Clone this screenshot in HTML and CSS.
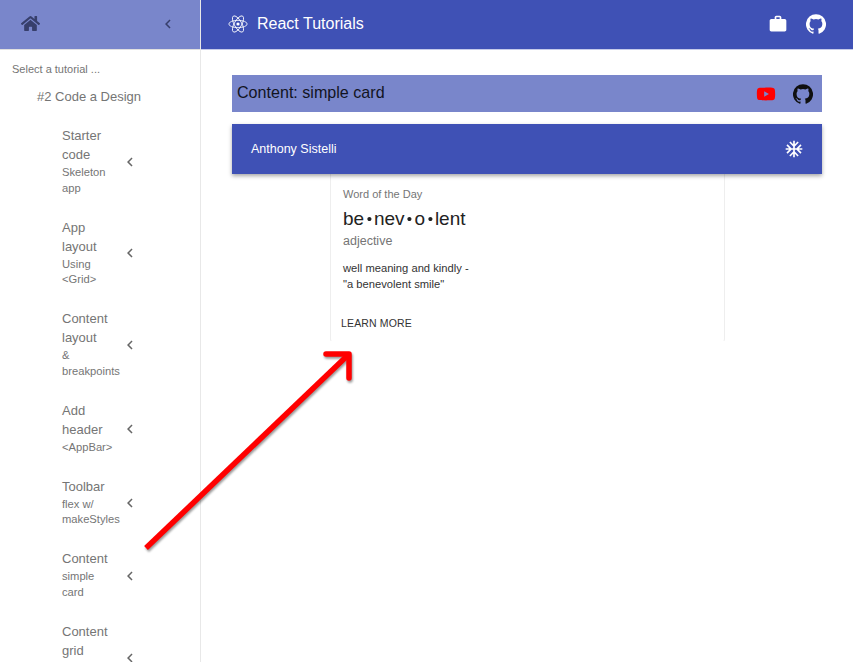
FILE: index.html
```html
<!DOCTYPE html>
<html lang="en">
<head>
    <meta charset="UTF-8">
    <meta name="viewport" content="width=device-width, initial-scale=1.0">
    <title>React Tutorials</title>
    <link rel="stylesheet" href="styles.css">
</head>
<body>
<svg class="defs" width="0" height="0">
    <symbol id="chevron" viewBox="0 0 24 24"><path d="M15.41 7.41L14 6l-6 6 6 6 1.41-1.41L10.83 12z"/></symbol>
    <symbol id="github" viewBox="0 0 24 24"><path d="M12 .3a12 12 0 0 0-3.8 23.4c.6.1.8-.3.8-.6v-2c-3.3.7-4-1.6-4-1.6-.6-1.4-1.4-1.8-1.4-1.8-1-.7.1-.7.1-.7 1.2 0 1.9 1.2 1.9 1.2 1 1.8 2.8 1.3 3.5 1 0-.8.4-1.3.7-1.6-2.7-.3-5.5-1.3-5.5-6 0-1.2.5-2.3 1.3-3.1-.2-.4-.6-1.6 0-3.2 0 0 1-.3 3.4 1.2a11.5 11.5 0 0 1 6 0c2.3-1.5 3.3-1.2 3.3-1.2.6 1.6.2 2.8 0 3.2.9.8 1.3 1.9 1.3 3.2 0 4.6-2.8 5.6-5.5 5.9.5.4.9 1 .9 2.2v3.3c0 .3.1.7.8.6A12 12 0 0 0 12 .3"/></symbol>
</svg>

<div class="page">
    <aside class="sidebar">
        <div class="sidebar-head">
            <svg class="home-icon" viewBox="0 0 576 512"><path d="M280.37 148.26L96 300.11V464a16 16 0 0 0 16 16l112.06-.29a16 16 0 0 0 15.92-16V368a16 16 0 0 1 16-16h64a16 16 0 0 1 16 16v95.64a16 16 0 0 0 16 16.05L464 480a16 16 0 0 0 16-16V300L295.67 148.26a12.19 12.19 0 0 0-15.3 0zM571.6 251.47L488 182.56V44.05a12 12 0 0 0-12-12h-56a12 12 0 0 0-12 12v72.61L318.47 43a48 48 0 0 0-61 0L4.34 251.47a12 12 0 0 0-1.6 16.9l25.5 31A12 12 0 0 0 45.15 301l235.22-193.74a12.19 12.19 0 0 1 15.3 0L530.9 301a12 12 0 0 0 16.9-1.6l25.5-31a12 12 0 0 0-1.7-16.93z"/></svg>
            <svg class="head-chevron"><use href="#chevron"/></svg>
        </div>
        <div class="select-label">Select a tutorial ...</div>
        <div class="tutorial-name">#2 Code a Design</div>
        <ul class="lessons">
            <li class="lesson">
                <div class="lesson-text">
                    <div class="lesson-title">Starter code</div>
                    <div class="lesson-sub">Skeleton app</div>
                </div>
                <svg class="lesson-chevron"><use href="#chevron"/></svg>
            </li>
            <li class="lesson">
                <div class="lesson-text">
                    <div class="lesson-title">App layout</div>
                    <div class="lesson-sub">Using &lt;Grid&gt;</div>
                </div>
                <svg class="lesson-chevron"><use href="#chevron"/></svg>
            </li>
            <li class="lesson">
                <div class="lesson-text">
                    <div class="lesson-title">Content layout</div>
                    <div class="lesson-sub">&amp; breakpoints</div>
                </div>
                <svg class="lesson-chevron"><use href="#chevron"/></svg>
            </li>
            <li class="lesson">
                <div class="lesson-text">
                    <div class="lesson-title">Add header</div>
                    <div class="lesson-sub">&lt;AppBar&gt;</div>
                </div>
                <svg class="lesson-chevron"><use href="#chevron"/></svg>
            </li>
            <li class="lesson">
                <div class="lesson-text">
                    <div class="lesson-title">Toolbar</div>
                    <div class="lesson-sub">flex w/ makeStyles</div>
                </div>
                <svg class="lesson-chevron"><use href="#chevron"/></svg>
            </li>
            <li class="lesson">
                <div class="lesson-text">
                    <div class="lesson-title">Content</div>
                    <div class="lesson-sub">simple<br>card</div>
                </div>
                <svg class="lesson-chevron"><use href="#chevron"/></svg>
            </li>
            <li class="lesson">
                <div class="lesson-text lesson-text-tall">
                    <div class="lesson-title">Content grid</div>
                </div>
                <svg class="lesson-chevron"><use href="#chevron"/></svg>
            </li>
        </ul>
    </aside>

    <div class="main">
        <header class="topbar">
            <svg class="react-icon" viewBox="0 0 24 24">
                <circle class="react-dot" cx="12" cy="12" r="1.9"/>
                <g class="react-orbits">
                    <ellipse cx="12" cy="12" rx="11" ry="4.4"/>
                    <ellipse cx="12" cy="12" rx="11" ry="4.4" transform="rotate(60 12 12)"/>
                    <ellipse cx="12" cy="12" rx="11" ry="4.4" transform="rotate(120 12 12)"/>
                </g>
            </svg>
            <div class="topbar-title">React Tutorials</div>
            <svg class="work-icon" viewBox="0 0 24 24"><path d="M20 6h-4V4c0-1.11-.89-2-2-2h-4c-1.11 0-2 .89-2 2v2H4c-1.11 0-1.99.89-1.99 2L2 19c0 1.11.89 2 2 2h16c1.11 0 2-.89 2-2V8c0-1.11-.89-2-2-2zm-6 0h-4V4h4v2z"/></svg>
            <svg class="topbar-github"><use href="#github"/></svg>
        </header>

        <section class="content">
            <div class="content-bar">
                <div class="content-title">Content: simple card</div>
                <svg class="youtube-icon" viewBox="0 0 24 24"><path d="M10 15l5.19-3L10 9v6m11.56-7.83c.13.47.22 1.1.28 1.9.07.8.1 1.49.1 2.09L22 12c0 2.19-.16 3.8-.44 4.83-.25.9-.83 1.48-1.73 1.73-.47.13-1.33.22-2.65.28-1.3.07-2.49.1-3.59.1L12 19c-4.19 0-6.8-.16-7.83-.44-.9-.25-1.48-.83-1.73-1.73-.13-.47-.22-1.1-.28-1.9-.07-.8-.1-1.49-.1-2.09L2 12c0-2.19.16-3.8.44-4.83.25-.9.83-1.48 1.73-1.73.47-.13 1.33-.22 2.65-.28 1.3-.07 2.49-.1 3.59-.1L12 5c4.19 0 6.8.16 7.83.44.9.25 1.48.83 1.73 1.73z"/></svg>
                <svg class="bar-github"><use href="#github"/></svg>
            </div>

            <div class="author-bar">
                <div class="author-name">Anthony Sistelli</div>
                <svg class="snow-icon" viewBox="0 0 24 24"><path d="M22 11h-4.17l3.24-3.24-1.41-1.42L15 11h-2V9l4.66-4.66-1.42-1.41L13 6.17V2h-2v4.17L7.76 2.93 6.34 4.34 11 9v2H9L4.34 6.34 2.93 7.76 6.17 11H2v2h4.17l-3.24 3.24 1.41 1.42L9 13h2v2l-4.66 4.66 1.42 1.41L11 17.83V22h2v-4.17l3.24 3.24 1.42-1.41L13 15v-2h2l4.66 4.66 1.41-1.42L17.83 13H22z"/></svg>
            </div>

            <div class="card">
                <div class="card-over">Word of the Day</div>
                <div class="card-word">be<span class="bullet">•</span>nev<span class="bullet">•</span>o<span class="bullet">•</span>lent</div>
                <div class="card-kind">adjective</div>
                <div class="card-body">well meaning and kindly -<br>"a benevolent smile"</div>
                <div class="card-action">LEARN MORE</div>
            </div>
        </section>
    </div>
</div>

<!-- annotation drawn over the screenshot -->
<svg class="arrow" viewBox="0 0 853 662">
    <path class="arrow-shaft" d="M146 548L347 356"/>
    <path d="M326 354H349V378"/>
</svg>
</body>
</html>
```

FILE: styles.css
```css
html, body {
    height: 100%;
}

body {
    margin: 0;
    font-family: "Liberation Sans", Arial, sans-serif;
    background-color: white;
    overflow: hidden;
}

.defs {
    position: absolute;
}

.page {
    display: flex;
    height: 662px;
    overflow: hidden;
}

/* sidebar */
.sidebar {
    flex: none;
    width: 200px;
    border-right: 1px solid #e8e8e8;
    overflow: hidden;
    color: #757575;
}

.sidebar-head {
    display: flex;
    align-items: center;
    justify-content: space-between;
    box-sizing: border-box;
    height: 50px;
    padding: 0 23px 2px 21px;
    background-color: #7986cb;
    border-bottom: 1px solid #e0e0e0;
}

.home-icon {
    width: 19px;
    height: 17px;
    fill: #373f6c;
}

.head-chevron {
    width: 18px;
    height: 18px;
    fill: #373f6c;
}

.select-label {
    margin: 12px 0 0 12px;
    font-size: 11px;
    line-height: 14px;
}

.tutorial-name {
    margin: 13px 0 0 37px;
    font-size: 13px;
    line-height: 16px;
}

.lessons {
    list-style: none;
    margin: 11px 0 0 0;
    padding: 0;
}

.lesson {
    display: flex;
    align-items: center;
    padding: 11.1px 0 11.1px 62px;
}

.lesson-text {
    width: 59px;
    flex: none;
}

.lesson-text-tall {
    min-height: 70px;
}

.lesson-title {
    font-size: 13px;
    line-height: 18.9px;
}

.lesson-sub {
    font-size: 11.2px;
    line-height: 15.8px;
}

.lesson-chevron {
    width: 18px;
    height: 18px;
    fill: #666666;
}

/* right side */
.main {
    flex: 1;
    min-width: 0;
}

.topbar {
    display: flex;
    align-items: center;
    box-sizing: border-box;
    height: 50px;
    padding: 0 27px 2px 27px;
    background-color: #3f51b5;
    border-bottom: 1px solid #c5cae9;
    color: white;
}

.react-icon {
    width: 20px;
    height: 20px;
    margin-right: 9px;
}

.react-dot {
    fill: white;
}

.react-orbits {
    fill: none;
    stroke: white;
    stroke-width: 1;
}

.topbar-title {
    flex: 1;
    font-size: 16px;
}

.work-icon {
    width: 20px;
    height: 20px;
    fill: white;
}

.topbar-github {
    width: 20px;
    height: 20px;
    margin-left: 18px;
    fill: white;
}

.content {
    padding: 25px 31px 0 31px;
}

.content-bar {
    display: flex;
    align-items: center;
    box-sizing: border-box;
    height: 37px;
    padding: 0 9px 0 5px;
    background-color: #7986cb;
    margin-bottom: 12px;
}

.content-title {
    flex: 1;
    padding-bottom: 2px;
    font-size: 16.1px;
    color: #12141f;
}

.youtube-icon {
    width: 22px;
    height: 22px;
    margin-right: -1px;
    fill: #ff0000;
}

.bar-github {
    width: 20px;
    height: 20px;
    margin-left: 17px;
    fill: #101010;
}

.author-bar {
    display: flex;
    align-items: center;
    justify-content: space-between;
    height: 50px;
    padding: 0 18px 0 19px;
    background-color: #3f51b5;
    color: white;
    box-shadow: 0 2px 4px rgba(0, 0, 0, 0.35);
    position: relative;
}

.author-name {
    font-size: 12.5px;
}

.snow-icon {
    width: 20px;
    height: 20px;
    fill: white;
}

.card {
    width: 395px;
    height: 168px;
    margin-left: 98px;
    box-sizing: border-box;
    padding: 14px 13px 0 12px;
    border-left: 1px solid #eeeeee;
    border-right: 1px solid #eeeeee;
    border-bottom: 1px solid white;
    border-radius: 0 0 3px 3px;
    color: #757575;
}

.card-over {
    font-size: 11px;
    line-height: 13px;
}

.card-word {
    margin-top: 6px;
    font-size: 19px;
    line-height: 24px;
    color: #222222;
}

.bullet {
    display: inline-block;
    margin: 0 1.6px;
    transform: scale(0.8);
}

.card-kind {
    margin-top: 2px;
    font-size: 12.5px;
    line-height: 16px;
}

.card-body {
    margin-top: 11px;
    font-size: 11.2px;
    line-height: 16px;
    color: #333333;
}

.card-action {
    margin: 24px 0 0 -2px;
    font-size: 10.5px;
    line-height: 14px;
    letter-spacing: 0.15px;
    color: #333333;
}

/* arrow overlay */
.arrow {
    position: absolute;
    left: 0;
    top: 0;
    width: 853px;
    height: 662px;
    pointer-events: none;
    filter: drop-shadow(1px 2px 1px rgba(0, 0, 0, 0.4));
}

.arrow path {
    fill: none;
    stroke: #ff0000;
    stroke-width: 5.5;
    stroke-linecap: round;
    stroke-linejoin: round;
}

.arrow .arrow-shaft {
    stroke-linecap: butt;
}
```
